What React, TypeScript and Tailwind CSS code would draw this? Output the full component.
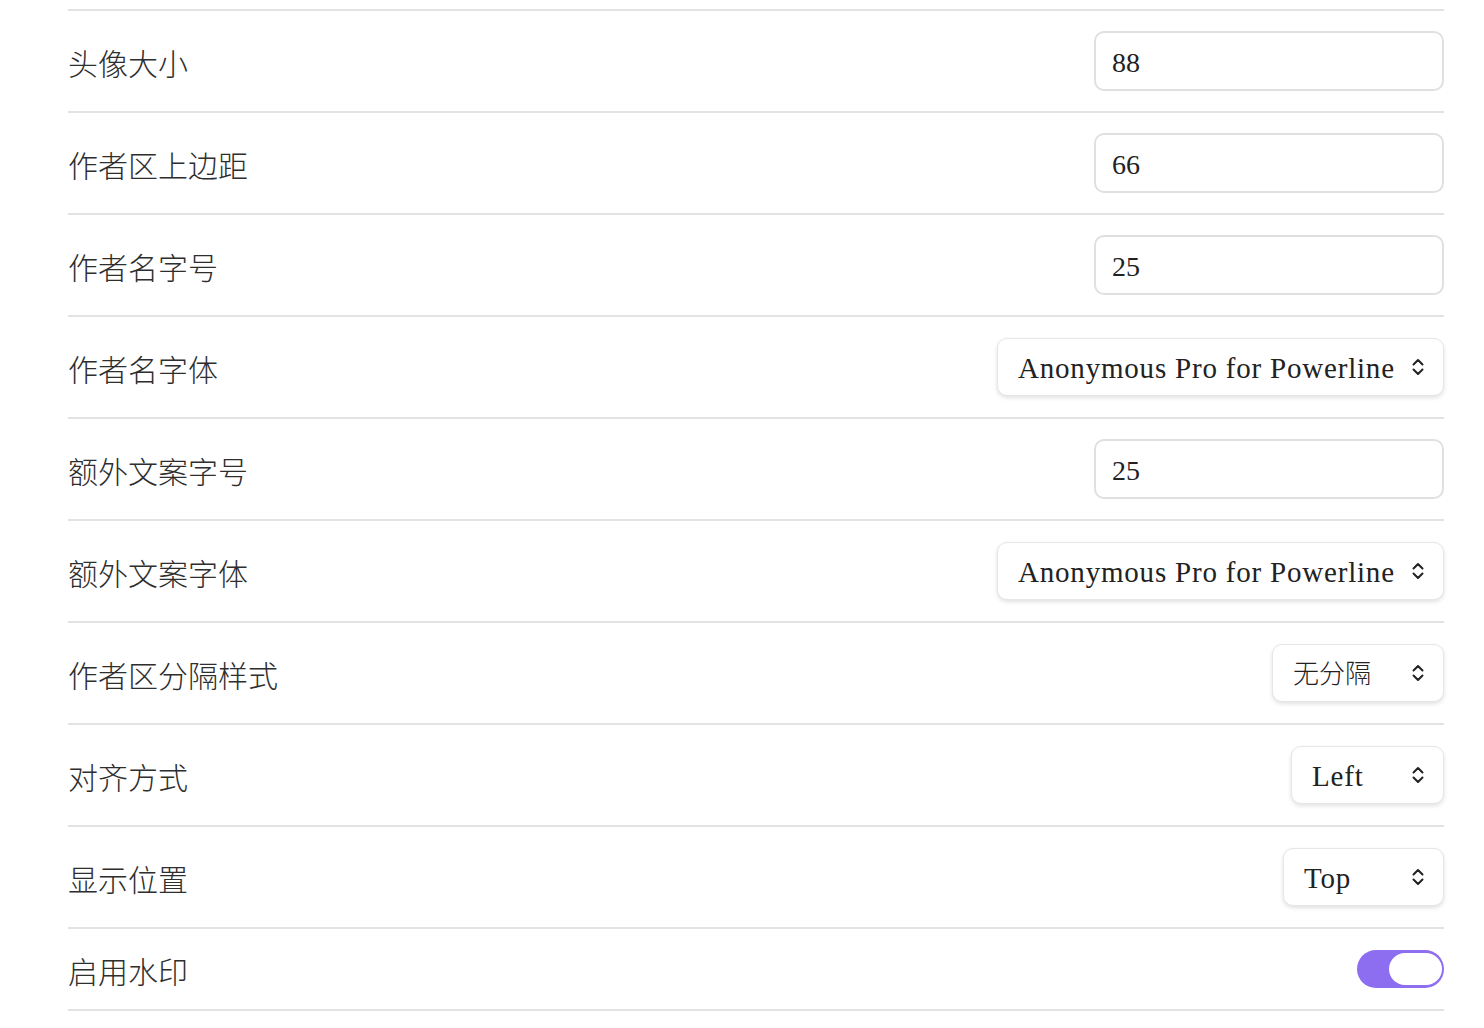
import React from 'react';

const serif = { fontFamily: '"Liberation Serif", "Noto Sans CJK SC", serif' };

function Chevron() {
  return (
    <svg width="14" height="18" viewBox="0 0 14 18" fill="none" stroke="#222" strokeWidth="2" strokeLinecap="round" strokeLinejoin="round">
      <path d="M2.5 6.5 L7 2 L11.5 6.5" />
      <path d="M2.5 11.5 L7 16 L11.5 11.5" />
    </svg>
  );
}

function TextInput({ value }: { value: string }) {
  return (
    <div className="w-[350px] h-[60px] rounded-[10px] border-2 border-[#e0e0e0] bg-white flex items-center px-[16px] text-[28px] text-[#222]" style={serif}>
      <span className="pt-[3px]">{value}</span>
    </div>
  );
}

function Select({ value, width, cjk }: { value: string; width: string; cjk?: boolean }) {
  return (
    <div
      className={`${width} h-[58px] rounded-[10px] border border-[#e6e6e6] bg-white flex items-center justify-between pl-[20px] pr-[18px] text-[#222] shadow-[0_2px_4px_rgba(0,0,0,0.12)]`}
      style={serif}
    >
      <span
        className={`whitespace-nowrap pt-[3px] ${cjk ? 'text-[26px] font-light' : 'text-[29px] tracking-[0.8px]'}`}
      >
        {value}
      </span>
      <Chevron />
    </div>
  );
}

function Toggle() {
  return (
    <div className="w-[87px] h-[38px] rounded-full bg-[#8e6ef0] flex items-center justify-end pr-[2px]">
      <div className="w-[53px] h-[32px] rounded-full bg-white" />
    </div>
  );
}

type Row = { label: string; kind: 'input' | 'select' | 'toggle'; value?: string; width?: string; cjk?: boolean };

const rows: Row[] = [
  { label: '头像大小', kind: 'input', value: '88' },
  { label: '作者区上边距', kind: 'input', value: '66' },
  { label: '作者名字号', kind: 'input', value: '25' },
  { label: '作者名字体', kind: 'select', value: 'Anonymous Pro for Powerline', width: 'w-[447px]' },
  { label: '额外文案字号', kind: 'input', value: '25' },
  { label: '额外文案字体', kind: 'select', value: 'Anonymous Pro for Powerline', width: 'w-[447px]' },
  { label: '作者区分隔样式', kind: 'select', value: '无分隔', width: 'w-[172px]', cjk: true },
  { label: '对齐方式', kind: 'select', value: 'Left', width: 'w-[153px]' },
  { label: '显示位置', kind: 'select', value: 'Top', width: 'w-[161px]' },
  { label: '启用水印', kind: 'toggle' },
];

export default function App() {
  return (
    <div className="w-[1484px] h-[1028px] bg-white overflow-hidden pt-[9px] pl-[68px] pr-[40px]">
      <div className="border-b-2 border-[#e3e3e3]">
        {rows.map((r, i) => (
          <div
            key={i}
            className={`flex items-center justify-between border-t-2 border-[#e3e3e3] ${r.kind === 'toggle' ? 'h-[82px]' : 'h-[102px]'}`}
          >
            <span
              className="text-[30px] text-[#2e2e2e] pt-[2px] font-light"
              style={{ fontFamily: '"Noto Sans CJK SC", sans-serif' }}
            >
              {r.label}
            </span>
            {r.kind === 'input' && <TextInput value={r.value!} />}
            {r.kind === 'select' && <Select value={r.value!} width={r.width!} cjk={r.cjk} />}
            {r.kind === 'toggle' && <Toggle />}
          </div>
        ))}
      </div>
    </div>
  );
}
